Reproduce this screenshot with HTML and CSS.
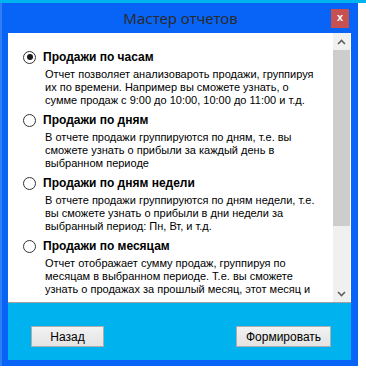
FILE: index.html
```html
<!DOCTYPE html>
<html lang="ru">

<head>
    <meta charset="UTF-8">
    <title>Мастер отчетов</title>
    <link rel="stylesheet" href="styles.css">
</head>

<body>
    <div id="polosa"></div>
    <div id="okno">
        <div id="zaglavlje">
            <span id="naslov">Мастер отчетов</span>
            <div id="zatvori">x</div>
        </div>

        <div id="panel">
            <div id="spisak">
                <div class="stavka">
                    <div class="red">
                        <span class="radio izabran"></span>
                        <span class="ime">Продажи по часам</span>
                    </div>
                    <p class="opis">Отчет позволяет анализовароть продажи, группируя<br>их по времени. Например вы сможете узнать, о<br>сумме продаж с 9:00 до 10:00, 10:00 до 11:00 и т.д.</p>
                </div>
                <div class="stavka">
                    <div class="red">
                        <span class="radio"></span>
                        <span class="ime">Продажи по дням</span>
                    </div>
                    <p class="opis">В отчете продажи группируются по дням, т.е. вы<br>сможете узнать о прибыли за каждый день в<br>выбранном периоде</p>
                </div>
                <div class="stavka">
                    <div class="red">
                        <span class="radio"></span>
                        <span class="ime">Продажи по дням недели</span>
                    </div>
                    <p class="opis">В отчете продажи группируются по дням недели, т.е.<br>вы сможете узнать о прибыли в дни недели за<br>выбранный период: Пн, Вт, и т.д.</p>
                </div>
                <div class="stavka">
                    <div class="red">
                        <span class="radio"></span>
                        <span class="ime">Продажи по месяцам</span>
                    </div>
                    <p class="opis">Отчет отображает сумму продаж, группируя по<br>месяцам в выбранном периоде. Т.е. вы сможете<br>узнать о продажах за прошлый месяц, этот месяц и</p>
                </div>
            </div>

            <div id="skrol">
                <div class="strelica">
                    <svg width="9" height="6" viewBox="0 0 9 6"><path d="M1 5 L4.5 1.5 L8 5" fill="none" stroke="#606060" stroke-width="1.6"/></svg>
                </div>
                <div id="klizac"></div>
                <div id="staza"></div>
                <div class="strelica">
                    <svg width="9" height="6" viewBox="0 0 9 6"><path d="M1 1 L4.5 4.5 L8 1" fill="none" stroke="#606060" stroke-width="1.6"/></svg>
                </div>
            </div>
        </div>

        <div id="dno">
            <button class="dugme" id="nazad">Назад</button>
            <button class="dugme" id="formiraj">Формировать</button>
        </div>
    </div>
</body>

</html>
```

FILE: styles.css
```css
body {
    margin: 0;
    background-color: white;
    font-family: "Liberation Sans", Arial, sans-serif;
    overflow: hidden;
}

#polosa {
    height: 3px;
    background-color: #00b4ef;
}

#okno {
    width: 358px;
    height: 363px;
    box-sizing: border-box;
    background-color: #0864f6;
    border-left: 2px solid #2f7ef3;
    padding: 0 7px 6px 6px;
    display: flex;
    flex-direction: column;
}

#zaglavlje {
    height: 30px;
    position: relative;
    display: flex;
    align-items: center;
    justify-content: center;
}

#naslov {
    font-family: "Noto Sans", sans-serif;
    font-size: 15px;
    color: #2b2b2b;
    margin-left: 2px;
}

#zatvori {
    position: absolute;
    right: 2px;
    top: 6px;
    width: 18px;
    height: 19px;
    background-color: #c75050;
    color: white;
    font-weight: bold;
    font-size: 11px;
    line-height: 17px;
    text-align: center;
}

#panel {
    height: 269px;
    background-color: white;
    border-bottom: 1px solid #a0a0a0;
    display: flex;
    overflow: hidden;
}

#spisak {
    flex: 1;
    padding: 16px 0 0 15px;
}

.stavka {
    margin-bottom: 5px;
}

.red {
    display: flex;
    align-items: center;
    height: 16px;
}

.radio {
    width: 11px;
    height: 11px;
    border: 1px solid #333;
    border-radius: 50%;
    background-color: white;
    display: flex;
    align-items: center;
    justify-content: center;
    margin-right: 7px;
}

.izabran::after {
    content: "";
    width: 6px;
    height: 6px;
    border-radius: 50%;
    background-color: #1a1a1a;
}

.ime {
    font-weight: bold;
    font-size: 12px;
    color: black;
}

.opis {
    margin: 3px 0 0 22px;
    height: 39px;
    font-size: 11px;
    line-height: 13px;
    color: black;
    white-space: nowrap;
}

#skrol {
    width: 17px;
    margin-right: 1px;
    background-color: #f0f0f0;
    display: flex;
    flex-direction: column;
}

.strelica {
    height: 17px;
    display: flex;
    align-items: center;
    justify-content: center;
}

#klizac {
    height: 176px;
    background-color: #cdcdcd;
}

#staza {
    flex: 1;
}

#dno {
    flex: 1;
    background-color: #00b3ee;
    display: flex;
    justify-content: space-between;
    align-items: flex-start;
    padding: 23px 20px 0 23px;
}

.dugme {
    height: 21px;
    border: 1px solid #adadad;
    background: linear-gradient(#f2f2f2, #e3e3e3);
    font-family: "Liberation Sans", Arial, sans-serif;
    font-size: 12px;
    color: black;
    padding: 0;
}

#nazad {
    width: 73px;
}

#formiraj {
    width: 95px;
}
```
